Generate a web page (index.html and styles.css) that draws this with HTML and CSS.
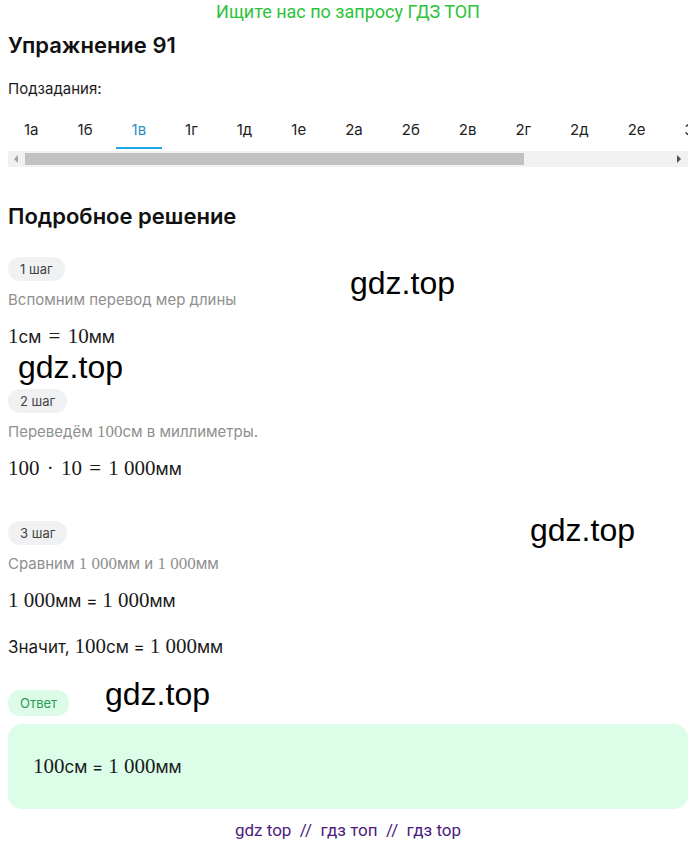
FILE: index.html
```html
<!DOCTYPE html>
<html lang="ru">
<head>
    <meta charset="utf-8">
    <title>Упражнение 91</title>
    <link rel="stylesheet" href="styles.css">
</head>
<body>

    <div class="promo">Ищите нас по запросу ГДЗ ТОП</div>

    <h1 class="title">Упражнение 91</h1>

    <div class="subtasks-label">Подзадания:</div>
    <div class="tabs">
        <a class="tab">1а</a>
        <a class="tab">1б</a>
        <a class="tab active">1в</a>
        <a class="tab">1г</a>
        <a class="tab">1д</a>
        <a class="tab">1е</a>
        <a class="tab">2а</a>
        <a class="tab">2б</a>
        <a class="tab">2в</a>
        <a class="tab">2г</a>
        <a class="tab">2д</a>
        <a class="tab">2е</a>
        <a class="tab">3а</a>
        <a class="tab">3б</a>
        <a class="tab">3в</a>
        <a class="tab">3г</a>
    </div>
    <div class="scrollbar">
        <span class="sb-btn">
            <svg width="5" height="8" viewBox="0 0 5 8"><path d="M4 0 0 4l4 4z" fill="#a3a3a3"/></svg>
        </span>
        <div class="sb-track"><div class="sb-thumb"></div></div>
        <span class="sb-btn">
            <svg width="5" height="8" viewBox="0 0 5 8"><path d="M0 0l4 4-4 4z" fill="#505050"/></svg>
        </span>
    </div>

    <h2 class="title section">Подробное решение</h2>

    <div class="step">
        <span class="pill">1 шаг</span>
        <p class="hint">Вспомним перевод мер длины</p>
        <p class="math">1<span class="u">см</span> <span class="op">=</span> 10<span class="u">мм</span></p>
    </div>

    <div class="step">
        <span class="pill">2 шаг</span>
        <p class="hint">Переведём <span class="m">100</span>см в миллиметры.</p>
        <p class="math">100 <span class="op">·</span> 10 <span class="op">=</span> 1 000<span class="u">мм</span></p>
    </div>

    <div class="step">
        <span class="pill">3 шаг</span>
        <p class="hint">Сравним <span class="m">1 000</span>мм и <span class="m">1 000</span>мм</p>
        <p class="math">1 000<span class="u">мм = </span>1 000<span class="u">мм</span></p>
        <p class="text">Значит, <span class="m">100</span>см = <span class="m">1 000</span>мм</p>
    </div>

    <div class="pill pill-green">Ответ</div>
    <div class="answer">
        <p class="math">100<span class="u">см = </span>1 000<span class="u">мм</span></p>
    </div>

    <div class="footer">gdz top &nbsp;//&nbsp; гдз топ &nbsp;//&nbsp; гдз top</div>

    <div class="mark mark-1">gdz.top</div>
    <div class="mark mark-2">gdz.top</div>
    <div class="mark mark-3">gdz.top</div>
    <div class="mark mark-4">gdz.top</div>

</body>
</html>
```

FILE: styles.css
```css
body {
    font-family: Inter, 'Noto Sans', sans-serif;
    color: #1a1a1a;
    background-color: #fff;
    margin: 0;
    padding: 0 7px 0 8px;
    position: relative;
}

p {
    margin: 0;
}

.promo {
    text-align: center;
    color: #2ac43a;
    font-family: Roboto, sans-serif;
    font-size: 18px;
    line-height: 24px;
}

.title {
    font-size: 22px;
    font-weight: 600;
    line-height: 30px;
    margin: 6px 0 0;
    color: #111;
}

.subtasks-label {
    font-size: 15px;
    line-height: 22px;
    margin-top: 18px;
}

.tabs {
    display: flex;
    gap: 7px;
    margin-top: 10px;
    overflow: hidden;
    white-space: nowrap;
}

.tab {
    flex: none;
    padding: 10px 16px 7px;
    font-size: 15px;
    line-height: 20px;
    color: #222;
    border-bottom: 2px solid transparent;
}

.tab.active {
    color: #2a8fc4;
    border-bottom-color: #1ea4e0;
}

/* fake horizontal scrollbar under the tabs */
.scrollbar {
    display: flex;
    height: 16px;
    margin-top: 2px;
    background-color: #f1f1f1;
}

.sb-btn {
    flex: none;
    width: 17px;
    display: flex;
    align-items: center;
    justify-content: center;
}

.sb-track {
    flex: 1;
    padding: 2px 0;
}

.sb-thumb {
    width: 77.2%;
    height: 100%;
    background-color: #c1c1c1;
}

.section {
    margin-top: 34px;
}

.step {
    margin-bottom: 38px;
}

.section + .step {
    margin-top: 26px;
}

.pill {
    display: inline-block;
    height: 24px;
    line-height: 24px;
    padding: 0 12px;
    border-radius: 12px;
    background-color: #f0f1f3;
    color: #444;
    font-size: 13px;
}

.hint {
    color: #8f8f8f;
    font-size: 15px;
    line-height: 20px;
    margin-top: 9px;
}

.m {
    font-family: 'Liberation Serif', serif;
    font-size: 17px;
}

.math {
    font-family: 'Liberation Serif', serif;
    font-size: 21px;
    line-height: 28px;
    margin-top: 12px;
}

.math .u {
    font-family: Inter, 'Noto Sans', sans-serif;
    font-size: 17px;
}

.math .op {
    padding: 0 2px;
}

.text {
    font-size: 17px;
    line-height: 28px;
    margin-top: 17px;
}

.text .m {
    font-size: 21px;
}

.pill-green {
    display: block;
    width: fit-content;
    background-color: #dcfce7;
    color: #2b9a55;
    height: 26px;
    line-height: 26px;
    margin-top: -9px;
}

.answer {
    margin-top: 8px;
    background-color: #dcfde8;
    border-radius: 14px;
    padding: 28px 25px;
}

.answer .math {
    margin-top: 0;
}

.footer {
    text-align: center;
    color: #4b1c7e;
    font-family: Roboto, sans-serif;
    font-size: 17px;
    line-height: 20px;
    margin-top: 11px;
    padding-bottom: 6px;
}

.mark {
    position: absolute;
    font-family: 'Liberation Sans', Arial, sans-serif;
    font-size: 32px;
    line-height: 32px;
    color: #000;
}

.mark-1 { left: 350px; top: 267px; }
.mark-2 { left: 18px; top: 351px; }
.mark-3 { left: 530px; top: 514px; }
.mark-4 { left: 105px; top: 678px; }
```
